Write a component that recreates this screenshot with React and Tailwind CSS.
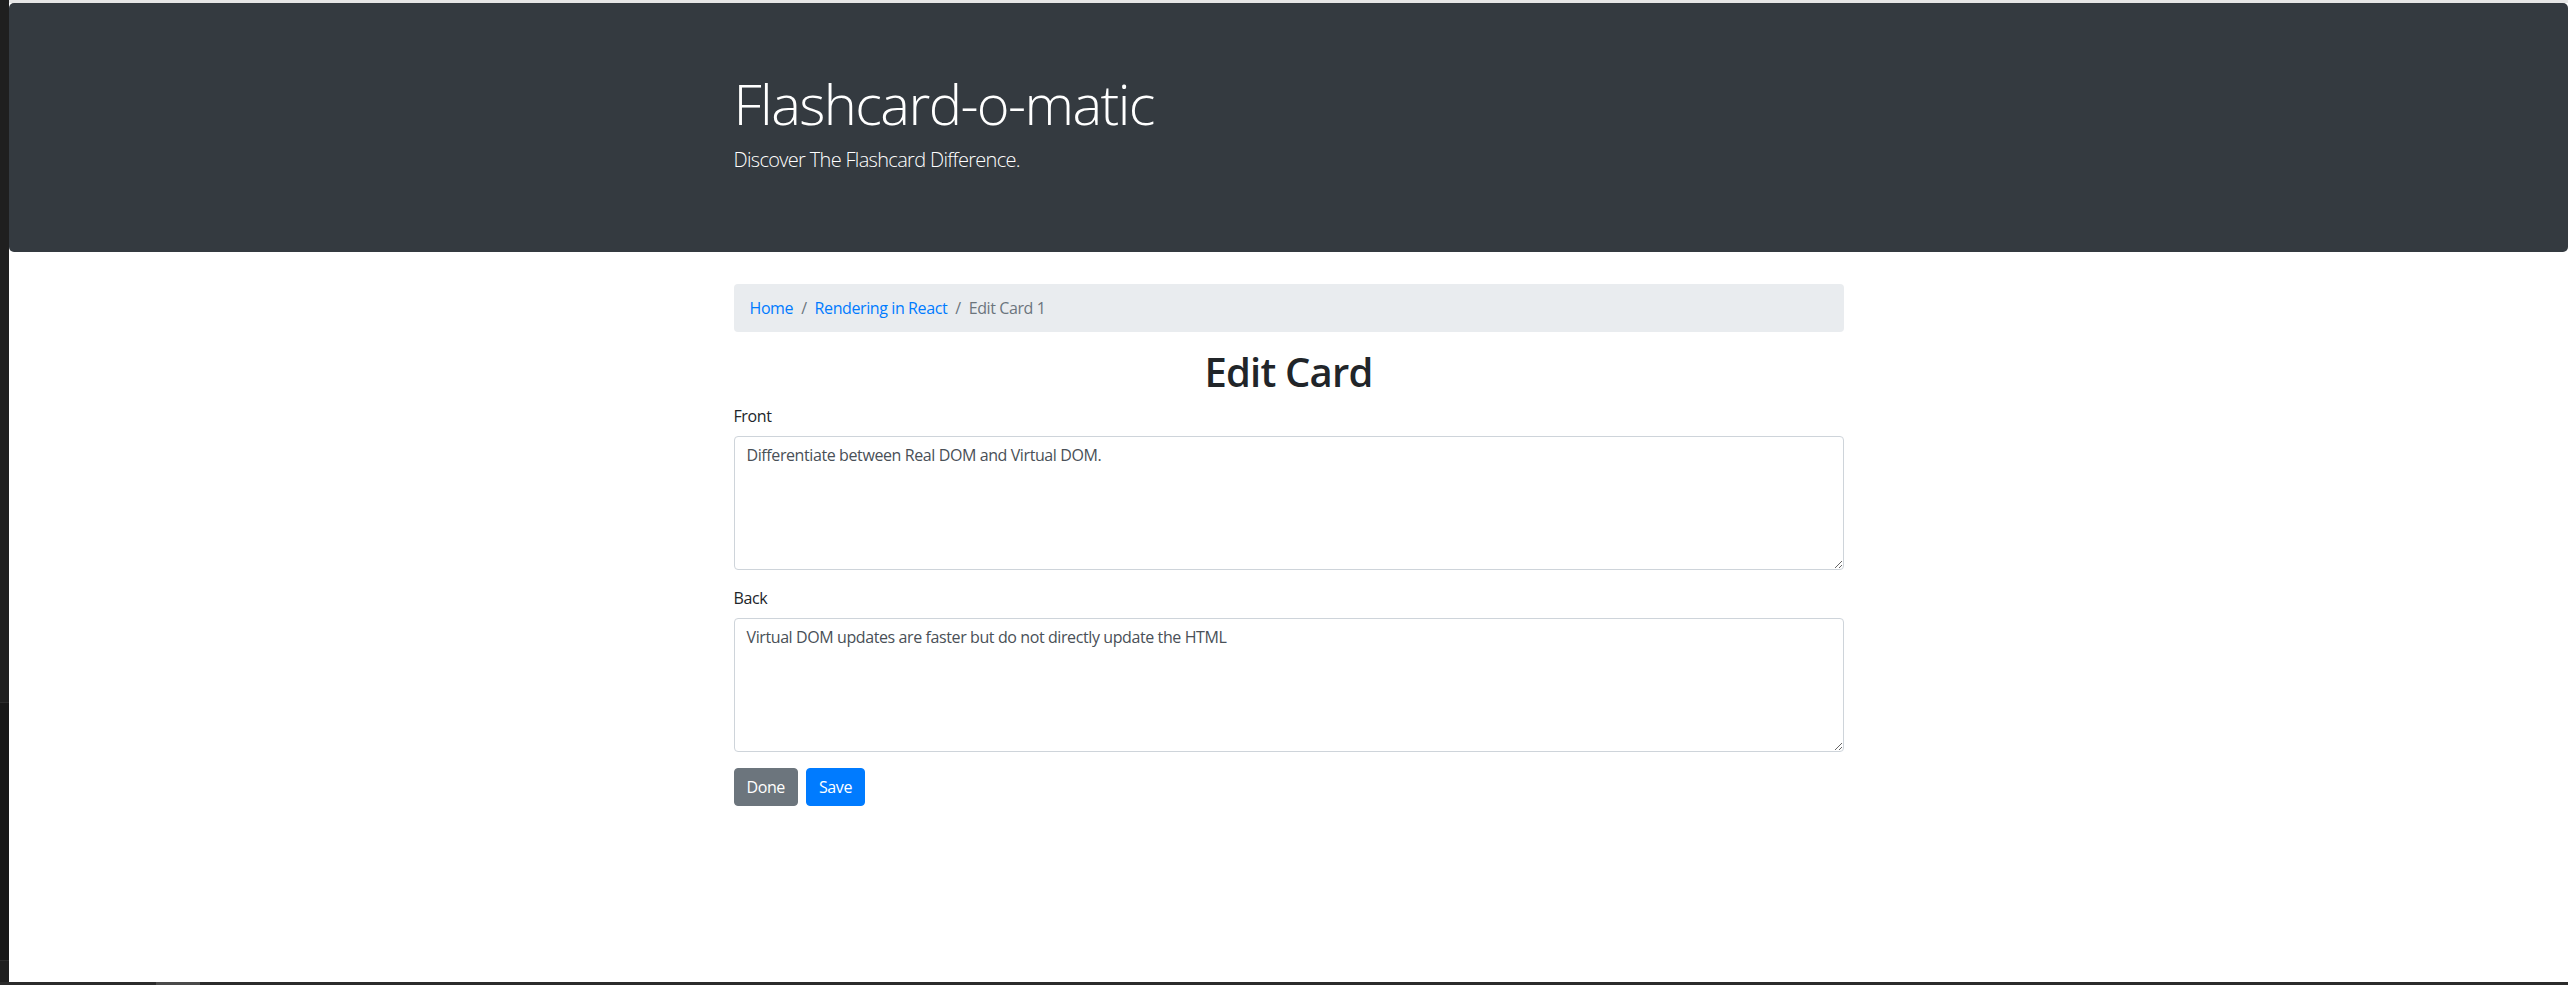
import React from "react";

const font = { fontFamily: '"Open Sans", "Noto Sans", "Liberation Sans", sans-serif' };

export default function App() {
  return (
    <div className="flex h-[985px] w-full flex-col overflow-hidden bg-white tracking-[-0.025em]" style={font}>
      <div className="flex min-h-0 flex-1">
        {/* left edge strip */}
        <div className="flex w-[9px] shrink-0 flex-col bg-[#181818]">
          <div className="h-[702px] bg-[#1f1f1f]" />
          <div className="h-px bg-[#2c2c2c]" />
          <div className="flex-1" />
          <div className="h-px bg-[#2c2c2c]" />
          <div className="h-[21px] bg-[#1f1f1f]" />
        </div>

        {/* page */}
        <div className="flex min-w-0 flex-1 flex-col">
          <div className="h-[3px] shrink-0 bg-[#e6e6e6]" />
          <main className="flex-1 bg-white">
            {/* jumbotron */}
            <header className="mb-8 rounded-[5px] bg-[#343a40] px-8 pt-[67px] pb-[61px]">
              <div className="mx-auto w-[1110px]">
                <h1 className="mb-2 text-[56px] font-light leading-[1.2] tracking-[-0.028em] text-white">
                  Flashcard-o-matic
                </h1>
                <p className="mb-4 text-[20px] font-light leading-[1.5] tracking-[-0.034em] text-white">
                  Discover The Flashcard Difference.
                </p>
              </div>
            </header>

            <div className="mx-auto w-[1110px] text-[16px] leading-6 text-[#212529]">
              {/* breadcrumb */}
              <nav className="mb-4 flex items-center rounded-[4px] bg-[#e9ecef] px-4 py-3">
                <span className="text-[#007bff]">Home</span>
                <span className="px-2 text-[#6c757d]">/</span>
                <span className="text-[#007bff]">Rendering in React</span>
                <span className="px-2 text-[#6c757d]">/</span>
                <span className="text-[#6c757d]">Edit Card 1</span>
              </nav>

              <h1 className="mb-2 text-center text-[40px] font-semibold leading-[1.2] tracking-[-0.02em] text-[#212529]">
                Edit Card
              </h1>

              <form>
                <div className="mb-4">
                  <label className="mb-2 block">Front</label>
                  <textarea
                    className="block h-[134px] w-full rounded-[4px] border border-[#ced4da] bg-white px-3 py-1.5 text-[16px] leading-6 tracking-[-0.025em] text-[#495057] outline-none"
                    defaultValue="Differentiate between Real DOM and Virtual DOM."
                  />
                </div>
                <div className="mb-4">
                  <label className="mb-2 block">Back</label>
                  <textarea
                    className="block h-[134px] w-full rounded-[4px] border border-[#ced4da] bg-white px-3 py-1.5 text-[16px] leading-6 tracking-[-0.025em] text-[#495057] outline-none"
                    defaultValue="Virtual DOM updates are faster but do not directly update the HTML"
                  />
                </div>
                <div className="flex gap-2">
                  <button
                    type="button"
                    className="rounded-[4px] border border-[#6c757d] bg-[#6c757d] px-3 py-1.5 text-[16px] leading-6 tracking-[-0.025em] text-white"
                  >
                    Done
                  </button>
                  <button
                    type="button"
                    className="rounded-[4px] border border-[#007bff] bg-[#007bff] px-3 py-1.5 text-[16px] leading-6 tracking-[-0.025em] text-white"
                  >
                    Save
                  </button>
                </div>
              </form>
            </div>
          </main>
        </div>
      </div>

      {/* bottom strip */}
      <div className="flex h-[3px] shrink-0 bg-[#2b2b2b]">
        <div className="w-[156px]" />
        <div className="w-[44px] bg-[#4a4a4a]" />
      </div>
    </div>
  );
}
